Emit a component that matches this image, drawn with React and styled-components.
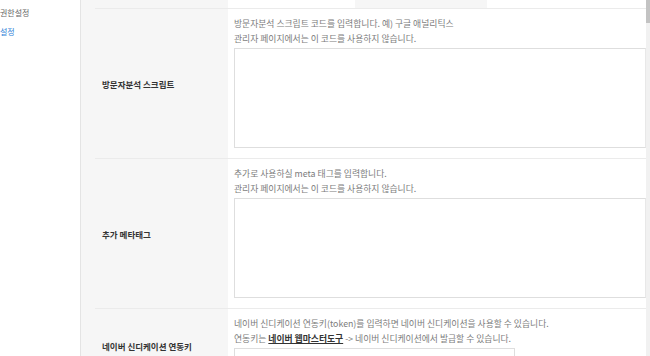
import React from "react";
import styled, { createGlobalStyle } from "styled-components";

const GlobalStyle = createGlobalStyle`
	html, body {
		margin: 0;
		padding: 0;
		height: 100%;
		overflow: hidden;
		background: #f6f6f6;
		font-family: "Noto Sans CJK KR", "Noto Sans", sans-serif;
	}
	#root {
		height: 100%;
	}
`;

const Page = styled.div`
	display: flex;
	height: 356px;
	width: 650px;
	overflow: hidden;
`;

const Sidebar = styled.nav`
	width: 81px;
	flex-shrink: 0;
	background: #fff;
	border-right: 1px solid #e4e4e4;
	padding-top: 5px;
	box-sizing: border-box;
`;

const MenuItem = styled.div`
	font-size: 8px;
	line-height: 16px;
	height: 19px;
	color: ${(p) => (p.$active ? "#2f7fd7" : "#666")};
	white-space: nowrap;
`;

const Main = styled.main`
	flex: 1;
	min-width: 0;
	padding-left: 14px;
	overflow: hidden;
`;

const Table = styled.div`
	background: #fff;
	display: flex;
	flex-direction: column;
`;

const Row = styled.div`
	display: grid;
	grid-template-columns: ${(p) => p.$cols || "133px 1fr"};
	border-bottom: 1px solid #ebebeb;
	height: ${(p) => p.$height || "auto"};
`;

const Label = styled.div`
	background: #f6f6f6;
	display: flex;
	align-items: center;
	padding-left: 7px;
	font-size: 8.5px;
	font-weight: 700;
	color: #333;
	white-space: nowrap;
`;

const Cell = styled.div`
	background: ${(p) => (p.$gray ? "#f6f6f6" : "#fff")};
	padding: ${(p) => (p.$pad ? "7px 0 10px 6px" : "0")};
	min-width: 0;
`;

const Help = styled.p`
	margin: 0;
	font-size: 8.8px;
	line-height: 15px;
	color: #7c7c7c;
	white-space: nowrap;
`;

const HelpLink = styled.a`
	color: #333;
	font-weight: 700;
	text-decoration: underline;
`;

const Area = styled.textarea`
	display: block;
	box-sizing: border-box;
	width: 100%;
	height: 100px;
	margin-top: 2px;
	border: 1px solid #dedede;
	border-right-color: #e8e8e8;
	resize: none;
	outline: none;
	background: #fff;
`;

const Input = styled.input`
	display: block;
	box-sizing: border-box;
	width: 281px;
	height: 25px;
	margin-top: 2px;
	border: 1px solid #dedede;
	outline: none;
	background: #fff;
`;

const Scrollbar = styled.div`
	width: 4px;
	flex-shrink: 0;
	background: #f1f1f1;
	display: flex;
	flex-direction: column;
`;

const Thumb = styled.div`
	height: 23px;
	background: #c3c3c3;
`;

const App = () => {
	return (
		<>
			<GlobalStyle />
			<Page>
				<Sidebar>
					<MenuItem>권한설정</MenuItem>
					<MenuItem $active>설정</MenuItem>
				</Sidebar>
				<Main>
					<Table>
						<Row $cols="133px 127px 132px 1fr" $height="8px">
							<Cell $gray />
							<Cell />
							<Cell $gray />
							<Cell />
						</Row>
						<Row>
							<Label>방문자분석 스크립트</Label>
							<Cell $pad>
								<Help>방문자분석 스크립트 코드를 입력합니다. 예) 구글 애널리틱스</Help>
								<Help>관리자 페이지에서는 이 코드를 사용하지 않습니다.</Help>
								<Area />
							</Cell>
						</Row>
						<Row>
							<Label>추가 메타태그</Label>
							<Cell $pad>
								<Help>추가로 사용하실 meta 태그를 입력합니다.</Help>
								<Help>관리자 페이지에서는 이 코드를 사용하지 않습니다.</Help>
								<Area />
							</Cell>
						</Row>
						<Row>
							<Label>네이버 신디케이션 연동키</Label>
							<Cell $pad>
								<Help>네이버 신디케이션 연동키(token)를 입력하면 네이버 신디케이션을 사용할 수 있습니다.</Help>
								<Help>
									연동키는 <HelpLink href="#">네이버 웹마스터도구</HelpLink> -&gt; 네이버 신디케이션에서 발급할 수 있습니다.
								</Help>
								<Input />
							</Cell>
						</Row>
					</Table>
				</Main>
				<Scrollbar>
					<Thumb />
				</Scrollbar>
			</Page>
		</>
	);
};

export default App;
